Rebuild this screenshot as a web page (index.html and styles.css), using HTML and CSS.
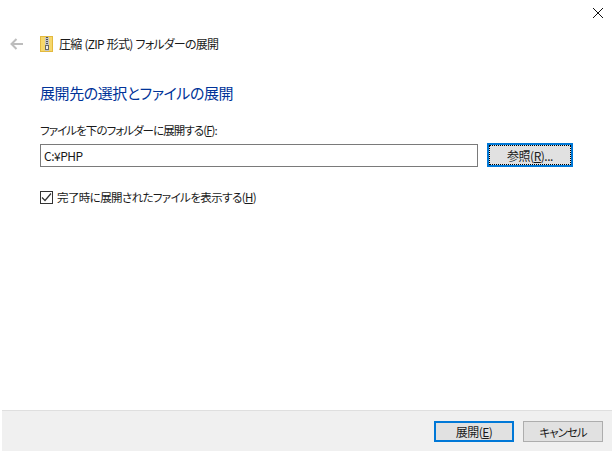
FILE: index.html
```html
<!DOCTYPE html>
<html lang="ja">
<head>
  <meta charset="UTF-8" />
  <title>圧縮 (ZIP 形式) フォルダーの展開</title>
  <link rel="stylesheet" href="styles.css">
</head>
<body>
  <div class="window">
    <div class="close-row">
      <svg class="close-icon" width="10" height="10" viewBox="0 0 10 10"><path d="M0 0L10 10M10 0L0 10" stroke="#111" stroke-width="1" fill="none"/></svg>
    </div>
    <div class="title-row">
      <svg class="back-icon" width="14" height="12" viewBox="0 0 14 12"><path d="M13 6H2M6.500 1L1.500 6L6.500 11" stroke="#bdbdbd" stroke-width="2" fill="none"/></svg>
      <svg class="zip-icon" width="13" height="16" viewBox="0 0 13 16">
        <rect x="0.500" y="0.500" width="12" height="15" fill="#f6d76b" stroke="#e3b93f"/>
        <rect x="5" y="1" width="4" height="14" fill="#c4c4c4"/>
        <path d="M6 1.500h2M6 3.500h2M6 5.500h2M6 7.500h2" stroke="#555" stroke-width="1"/>
        <rect x="5.500" y="9.500" width="3" height="4" fill="#eee" stroke="#666"/>
      </svg>
      <span class="title-text">圧縮 (ZIP 形式) フォルダーの展開</span>
    </div>
    <div class="content">
      <h1 class="heading">展開先の選択とファイルの展開</h1>
      <label class="field-label">ファイルを下のフォルダーに展開する(<u>F</u>):</label>
      <div class="path-row">
        <input class="path-input" type="text" value="C:¥PHP">
        <button class="btn btn-browse"><span class="focus-dots">参照(<u>R</u>)...</span></button>
      </div>
      <div class="check-row">
        <span class="checkbox">
          <svg width="11" height="11" viewBox="0 0 11 11"><path d="M1 5.500L4 8.500L10 1.500" stroke="#333" stroke-width="1.200" fill="none"/></svg>
        </span>
        <span class="check-text">完了時に展開されたファイルを表示する(<u>H</u>)</span>
      </div>
    </div>
    <div class="footer">
      <button class="btn btn-primary">展開(<u>E</u>)</button>
      <button class="btn btn-cancel">キャンセル</button>
    </div>
  </div>
</body>
</html>
```

FILE: styles.css
```css
* { box-sizing: border-box; }

html, body {
  height: 100%;
}

body {
  margin: 0;
  background: #fff;
  color: #1a1a1a;
  font-family: "Noto Sans CJK JP", "Liberation Sans", sans-serif;
  font-size: 12px;
  font-feature-settings: "palt";
  overflow: hidden;
}

.window {
  display: flex;
  flex-direction: column;
  height: 453px;
  padding: 0 0 2px 2px;
}

.close-row {
  display: flex;
  justify-content: flex-end;
  height: 29px;
  padding: 8px 9px 0 0;
}

.title-row {
  display: flex;
  align-items: center;
  height: 29px;
  padding-left: 8px;
}

.back-icon {
  margin-right: 16px;
}

.zip-icon {
  margin-right: 6px;
}

.title-text {
  letter-spacing: -0.8px;
  word-spacing: 1.200px;
}

.content {
  flex: 1;
  padding: 0 38px;
}

.heading {
  margin: 23px 0 0;
  color: #003399;
  font-size: 15px;
  font-weight: 400;
  letter-spacing: -0.43px;
  line-height: 24px;
}

.field-label {
  display: block;
  margin-top: 16px;
  font-size: 11.500px;
  letter-spacing: -0.93px;
  line-height: 18px;
}

.path-row {
  display: flex;
  gap: 9px;
  margin-top: 4px;
  align-items: center;
}

.path-input {
  width: 438px;
  height: 23px;
  padding: 0 3px;
  border: 1px solid #7a7a7a;
  color: #1a1a1a;
  font: inherit;
  letter-spacing: -0.5px;
  outline: none;
}

.btn {
  padding: 0;
  background: #e1e1e1;
  border: 1px solid #adadad;
  color: #1a1a1a;
  font: inherit;
  letter-spacing: -0.5px;
}

.btn-browse {
  width: 86px;
  height: 24px;
  border: 2px solid #0078d7;
}

.focus-dots {
  display: flex;
  align-items: center;
  justify-content: center;
  height: 100%;
  border: 1px dotted #000;
}

.check-row {
  display: flex;
  align-items: center;
  gap: 4px;
  margin-top: 21px;
  line-height: 18px;
}

.check-text {
  font-size: 11.500px;
  letter-spacing: -0.6px;
}

.checkbox {
  display: flex;
  align-items: center;
  justify-content: center;
  width: 13px;
  height: 13px;
  background: #fff;
  border: 1px solid #333;
}

.footer {
  display: flex;
  justify-content: flex-end;
  gap: 9px;
  height: 41px;
  padding: 10px 9px 0 0;
  background: #f0f0f0;
  border-top: 1px solid #dfdfdf;
}

.btn-primary {
  width: 80px;
  height: 21px;
  border: 2px solid #0078d7;
}

.btn-cancel {
  width: 80px;
  height: 21px;
  font-size: 11.500px;
  letter-spacing: -1px;
}
```
